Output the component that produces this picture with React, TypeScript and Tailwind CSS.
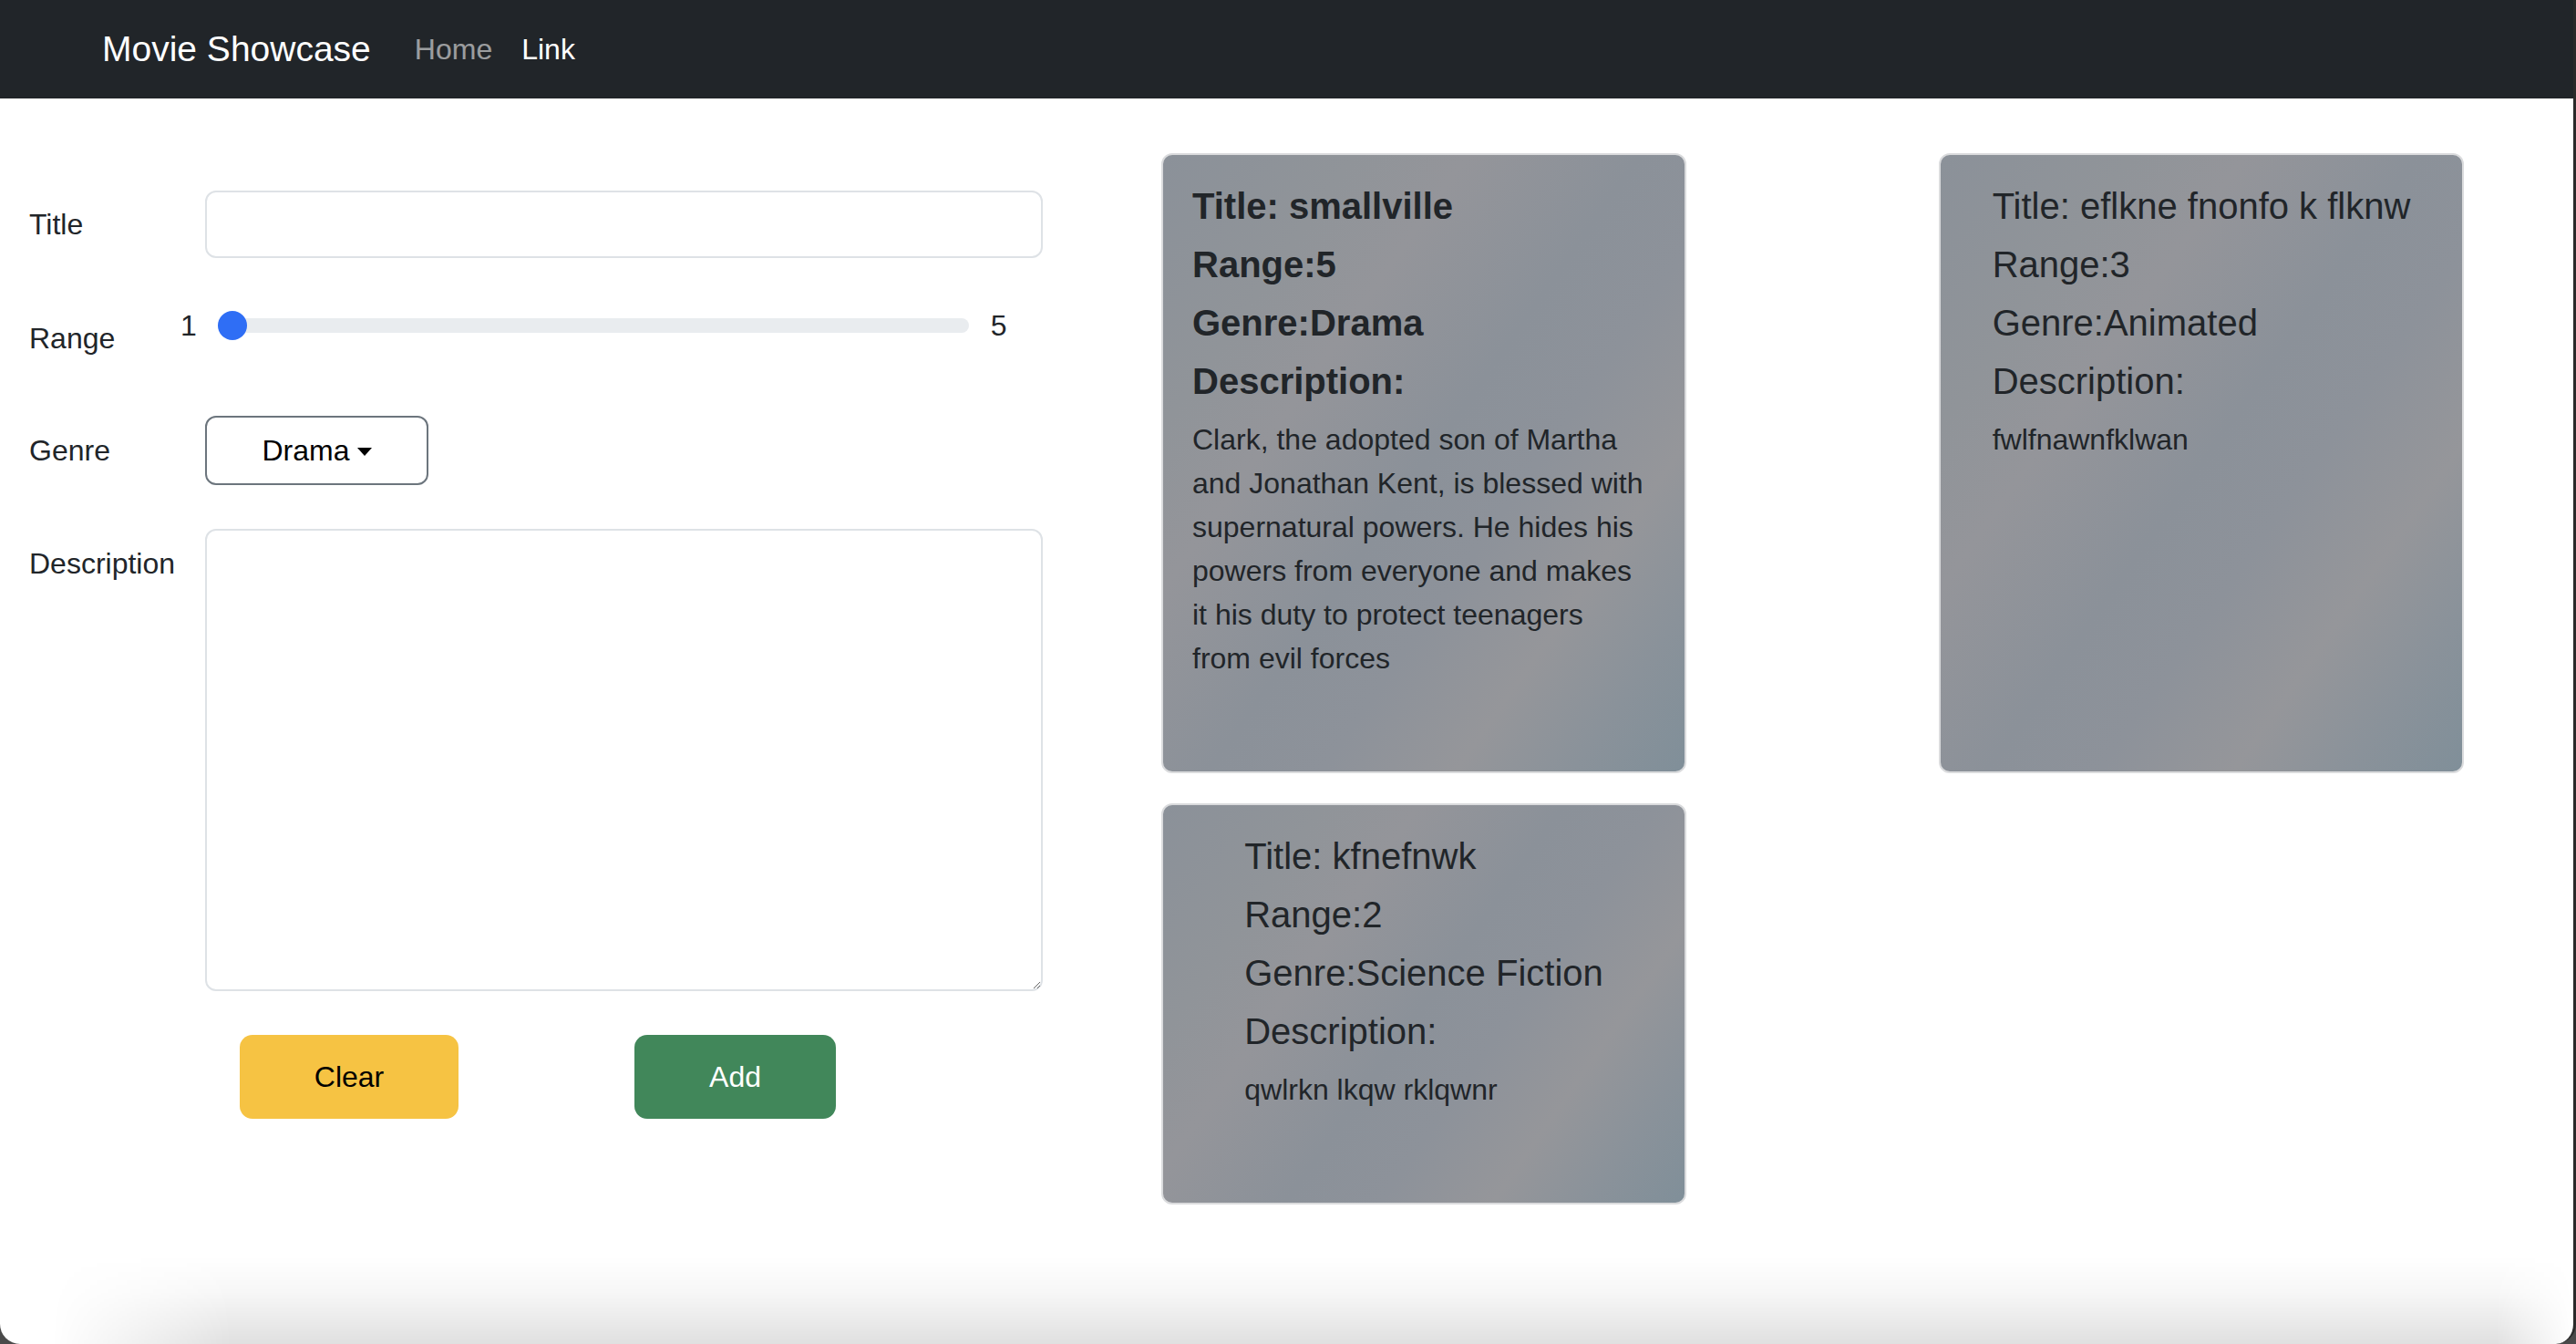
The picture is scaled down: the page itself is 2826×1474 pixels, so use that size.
import React from "react";

type Movie = {
  title: string;
  range: number;
  genre: string;
  lines: string[];
  bold?: boolean;
};

const movies: Movie[] = [
  {
    title: "smallville",
    range: 5,
    genre: "Drama",
    bold: true,
    lines: [
      "Clark, the adopted son of Martha",
      "and Jonathan Kent, is blessed with",
      "supernatural powers. He hides his",
      "powers from everyone and makes",
      "it his duty to protect teenagers",
      "from evil forces",
    ],
  },
  {
    title: "eflkne fnonfo k flknw",
    range: 3,
    genre: "Animated",
    lines: ["fwlfnawnfklwan"],
  },
  {
    title: "kfnefnwk",
    range: 2,
    genre: "Science Fiction",
    lines: ["qwlrkn lkqw rklqwnr"],
  },
];

function MovieCard({ m }: { m: Movie }) {
  const h = m.bold
    ? "text-[40px] leading-[48px] mb-[16px] font-bold whitespace-nowrap"
    : "text-[40px] leading-[48px] mb-[16px] font-medium whitespace-nowrap";
  return (
    <div className="w-[576px] rounded-[12px] border-2 border-[#dadbdd] bg-[linear-gradient(125deg,#8b9199_0%,#909499_20%,#94959a_32%,#8b9199_50%,#8d929a_62%,#95969a_76%,#8a929a_88%,#808f99_100%)] pt-[32px] pb-[68px] px-[32px] text-[#212529]">
      <div className={m.bold ? "flex justify-start" : "flex justify-center"}>
        <div className="w-fit">
          <div className={h}>Title: {m.title}</div>
          <div className={h}>Range:{m.range}</div>
          <div className={h}>Genre:{m.genre}</div>
          <div className={h}>Description:</div>
          <p className="text-[32px] leading-[48px] mb-[32px]">
            {m.lines.map((l, i) => (
              <span key={i} className="block whitespace-nowrap">
                {l}
              </span>
            ))}
          </p>
        </div>
      </div>
    </div>
  );
}

export default function App() {
  return (
    <div className="bg-[#4a4a4a]">
      <div className="relative h-[1474px] w-full overflow-hidden rounded-b-[22px] border-r-[3px] border-[#2a2a2a] bg-white font-['Liberation_Sans',Arial,sans-serif] text-[#212529]">
        {/* Navbar */}
        <nav className="flex h-[108px] items-center bg-[#212529] pl-[112px]">
          <span className="mr-[32px] text-[39px] leading-[60px] text-white">Movie Showcase</span>
          <a className="px-[16px] text-[32px] leading-[48px] text-white/55">Home</a>
          <a className="px-[16px] text-[32px] leading-[48px] text-white">Link</a>
        </nav>

        <main className="flex pt-[60px]">
          {/* Form */}
          <div className="w-[1144px] shrink-0 pl-[32px] pt-[41px]">
            {/* Title */}
            <div className="flex h-[74px] items-center">
              <label className="w-[193px] text-[32px] leading-[48px]">Title</label>
              <input
                readOnly
                className="h-[74px] w-[919px] rounded-[12px] border-2 border-[#dee2e6] bg-white px-[24px] text-[32px] outline-none"
              />
            </div>

            {/* Range */}
            <div className="mt-[50px] flex h-[76px] items-center">
              <label className="w-[166px] text-[32px] leading-[48px]">Range</label>
              <div className="flex h-[48px] self-start items-center">
                <span className="text-[32px] leading-[48px]">1</span>
                <div className="relative ml-[23px] h-[16px] w-[824px] rounded-full bg-[#e9ecef]">
                  <div className="absolute left-0 top-1/2 h-[32px] w-[32px] -translate-y-1/2 rounded-full bg-[#2f6ef5]" />
                </div>
                <span className="ml-[24px] text-[32px] leading-[48px]">5</span>
              </div>
            </div>

            {/* Genre */}
            <div className="mt-[47px] flex h-[76px] items-center">
              <label className="w-[193px] text-[32px] leading-[48px]">Genre</label>
              <button className="flex h-[76px] w-[245px] items-center justify-center rounded-[12px] border-2 border-[#6c757d] bg-white text-[32px] leading-[48px] text-black">
                Drama
                <span className="ml-[8px] mt-[2px] inline-block h-0 w-0 border-x-[8px] border-t-[9px] border-x-transparent border-t-black" />
              </button>
            </div>

            {/* Description */}
            <div className="mt-[48px] flex">
              <label className="w-[193px] pt-[14px] text-[32px] leading-[48px]">Description</label>
              <textarea
                readOnly
                className="h-[507px] w-[919px] rounded-[12px] border-2 border-[#dee2e6] bg-white px-[24px] py-[12px] text-[32px] outline-none"
              />
            </div>

            {/* Buttons */}
            <div className="mt-[48px] flex">
              <button className="ml-[231px] flex h-[92px] w-[240px] items-center justify-center rounded-[14px] bg-[#f6c343] text-[32px] text-black">
                Clear
              </button>
              <button className="ml-[193px] flex h-[92px] w-[221px] items-center justify-center rounded-[14px] bg-[#41875a] text-[32px] text-white">
                Add
              </button>
            </div>
          </div>

          {/* Cards */}
          <div className="ml-[130px] flex w-[1429px] flex-wrap content-start justify-between gap-y-[33px]">
            {movies.map((m, i) => (
              <MovieCard key={i} m={m} />
            ))}
          </div>
        </main>

        {/* window bottom shade */}
        <div className="pointer-events-none absolute inset-x-0 bottom-0 h-[96px] bg-[linear-gradient(to_bottom,rgba(0,0,0,0),rgba(0,0,0,0.03)_40%,rgba(0,0,0,0.12))] [mask-image:linear-gradient(to_right,transparent_2%,black_9%,black_97%,transparent)]" />
      </div>
    </div>
  );
}
